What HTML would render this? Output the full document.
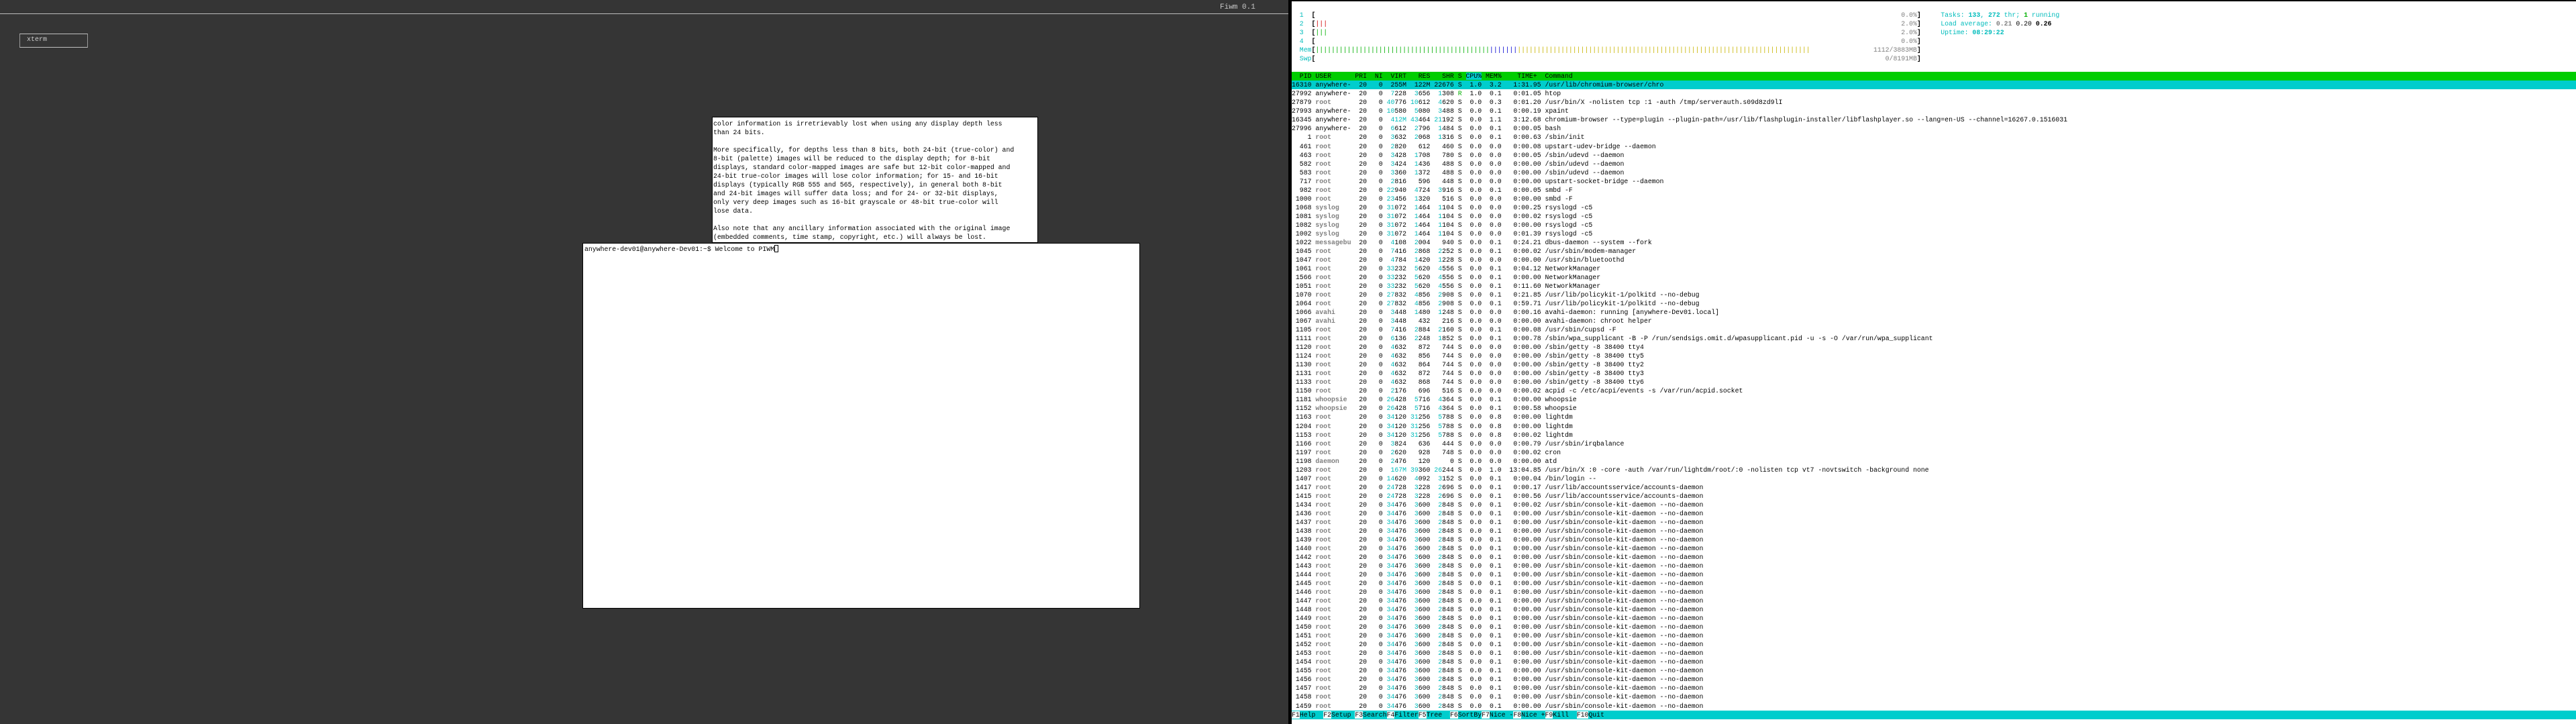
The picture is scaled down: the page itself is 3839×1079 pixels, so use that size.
<!DOCTYPE html>
<html><head><meta charset="utf-8">
<style>
*{margin:0;padding:0;box-sizing:border-box}
html,body{width:3839px;height:1079px;overflow:hidden;background:#353535}
body{position:relative;font-family:"Liberation Mono",monospace;font-size:9.83px;color:#000}
.ln{white-space:pre;height:13.04px;line-height:13.04px}
#topline{position:absolute;left:0;top:20px;width:1920px;height:1px;background:#bdbdbd}
#title{position:absolute;left:1818px;top:5px;color:#c8c8c8;font-size:11px;line-height:12px}
#btn{position:absolute;left:29px;top:50px;width:102px;height:21px;border:1px solid #9a9a9a;border-top-color:#c0c0c0;border-bottom-color:#c0c0c0;color:#cfcfcf;padding-left:10px;line-height:18px;font-size:10px}
#tw{position:absolute;left:1061px;top:174px;width:486px;height:188px;background:#fff;border:1px solid #000;overflow:hidden;padding:3px 0 0 1px}
#xt{position:absolute;left:868px;top:362px;width:831px;height:545px;background:#fff;border:1px solid #000;padding:2px 0 0 2px}
.cur{display:inline-block;width:6px;height:11px;border:1px solid #000;vertical-align:-2px}
#term{position:absolute;left:1920px;top:0;width:1919px;height:1079px;background:#fff;border-left:5px solid #000;border-top:2px solid #000}
#rows{position:absolute;left:0;top:1px;width:100%}
.c{color:#00bcbc}
.cb{color:#00bcbc;font-weight:bold}
.g{color:#7f7f7f;font-weight:bold}
.gr{color:#7f7f7f}
.G{color:#00b000}
.Gb{color:#00b000;font-weight:bold}
.R{color:#d00000}
.B{color:#0000d0}
.Y{color:#c8b400}
.b{font-weight:bold}
.hdr{background:#00cd00}
.sel{background:#00cdcd}
.hs{background:#00cdcd}
.m{position:relative}
.mv{position:absolute;left:0;top:0;width:159ch;text-align:right}
.rt{position:absolute;left:164ch;top:0}
.fk{background:#fff}
.fl{background:#00cdcd}
</style></head><body>
<div id="topline"></div>
<div id="title">Fiwm 0.1</div>
<div id="btn">xterm</div>

<div id="tw"><div class="ln">color information is irretrievably lost when using any display depth less</div><div class="ln">than 24 bits.</div><div class="ln"> </div><div class="ln">More specifically, for depths less than 8 bits, both 24-bit (true-color) and</div><div class="ln">8-bit (palette) images will be reduced to the display depth; for 8-bit</div><div class="ln">displays, standard color-mapped images are safe but 12-bit color-mapped and</div><div class="ln">24-bit true-color images will lose color information; for 15- and 16-bit</div><div class="ln">displays (typically RGB 555 and 565, respectively), in general both 8-bit</div><div class="ln">and 24-bit images will suffer data loss; and for 24- or 32-bit displays,</div><div class="ln">only very deep images such as 16-bit grayscale or 48-bit true-color will</div><div class="ln">lose data.</div><div class="ln"> </div><div class="ln">Also note that any ancillary information associated with the original image</div><div class="ln">(embedded comments, time stamp, copyright, etc.) will always be lost.</div></div>

<div id="xt"><div class="ln">anywhere-dev01@anywhere-Dev01:~$ Welcome to PIWM<span class="cur"></span></div></div>

<div id="term"><div id="rows">
<div class="ln"> </div>
<div class="ln m"><span class="c">  1  </span><span class="b">[</span><span class="mv"><span class="gr">0.0%</span><span class="b">]</span></span><span class="rt"><span class="c">Tasks: </span><span class="cb">133</span><span class="c">, </span><span class="cb">272</span><span class="c"> thr; </span><span class="Gb">1</span><span class="c"> running</span></span></div>
<div class="ln m"><span class="c">  2  </span><span class="b">[</span><span class="R">|||</span><span class="mv"><span class="gr">2.0%</span><span class="b">]</span></span><span class="rt"><span class="c">Load average: </span><span class="gr b">0.21 </span>0.20 <span class="b">0.26</span></span></div>
<div class="ln m"><span class="c">  3  </span><span class="b">[</span><span class="G">|||</span><span class="mv"><span class="gr">2.0%</span><span class="b">]</span></span><span class="rt"><span class="c">Uptime: </span><span class="cb">08:29:22</span></span></div>
<div class="ln m"><span class="c">  4  </span><span class="b">[</span><span class="mv"><span class="gr">0.0%</span><span class="b">]</span></span></div>
<div class="ln m"><span class="c">  Mem</span><span class="b">[</span><span class="G">||||||||||||||||||||||||||||||||||||||||||||</span><span class="B">|||||||</span><span class="Y">||||||||||||||||||||||||||||||||||||||||||||||||||||||||||||||||||||||||||</span><span class="mv"><span class="gr">1112/3883MB</span><span class="b">]</span></span></div>
<div class="ln m"><span class="c">  Swp</span><span class="b">[</span><span class="mv"><span class="gr">0/8191MB</span><span class="b">]</span></span></div>
<div class="ln"> </div>
<div class="ln hdr">  PID USER      PRI  NI  VIRT   RES   SHR S <span class="hs">CPU%</span> MEM%    TIME+  Command</div>
<div class="ln sel">16310 anywhere-  20   0  255M  122M 22676 S  1.0  3.2   1:31.95 /usr/lib/chromium-browser/chro</div>
<div class="ln">27992 anywhere-  20   0  <span class="c">7</span>228  <span class="c">3</span>656  <span class="c">1</span>308 <span class="G">R</span>  1.0  0.1   0:01.05 htop</div>
<div class="ln">27879 <span class="g">root</span>       20   0 <span class="c">40</span>776 <span class="c">10</span>612  <span class="c">4</span>620 S  0.0  0.3   0:01.20 /usr/bin/X -nolisten tcp :1 -auth /tmp/serverauth.s09d8zd9lI</div>
<div class="ln">27993 anywhere-  20   0 <span class="c">10</span>580  <span class="c">5</span>080  <span class="c">3</span>488 S  0.0  0.1   0:00.19 xpaint</div>
<div class="ln">16345 anywhere-  20   0  <span class="c">412M</span> <span class="c">43</span>464 <span class="c">21</span>192 S  0.0  1.1   3:12.68 chromium-browser --type=plugin --plugin-path=/usr/lib/flashplugin-installer/libflashplayer.so --lang=en-US --channel=16267.0.1516031</div>
<div class="ln">27996 anywhere-  20   0  <span class="c">6</span>612  <span class="c">2</span>796  <span class="c">1</span>484 S  0.0  0.1   0:00.05 bash</div>
<div class="ln">    1 <span class="g">root</span>       20   0  <span class="c">3</span>632  <span class="c">2</span>068  <span class="c">1</span>316 S  0.0  0.1   0:00.63 /sbin/init</div>
<div class="ln">  461 <span class="g">root</span>       20   0  <span class="c">2</span>820   612   460 S  0.0  0.0   0:00.08 upstart-udev-bridge --daemon</div>
<div class="ln">  463 <span class="g">root</span>       20   0  <span class="c">3</span>428  <span class="c">1</span>708   780 S  0.0  0.0   0:00.05 /sbin/udevd --daemon</div>
<div class="ln">  582 <span class="g">root</span>       20   0  <span class="c">3</span>424  <span class="c">1</span>436   488 S  0.0  0.0   0:00.00 /sbin/udevd --daemon</div>
<div class="ln">  583 <span class="g">root</span>       20   0  <span class="c">3</span>360  <span class="c">1</span>372   488 S  0.0  0.0   0:00.00 /sbin/udevd --daemon</div>
<div class="ln">  717 <span class="g">root</span>       20   0  <span class="c">2</span>816   596   448 S  0.0  0.0   0:00.00 upstart-socket-bridge --daemon</div>
<div class="ln">  982 <span class="g">root</span>       20   0 <span class="c">22</span>940  <span class="c">4</span>724  <span class="c">3</span>916 S  0.0  0.1   0:00.05 smbd -F</div>
<div class="ln"> 1000 <span class="g">root</span>       20   0 <span class="c">23</span>456  <span class="c">1</span>320   516 S  0.0  0.0   0:00.00 smbd -F</div>
<div class="ln"> 1068 <span class="g">syslog</span>     20   0 <span class="c">31</span>072  <span class="c">1</span>464  <span class="c">1</span>104 S  0.0  0.0   0:00.25 rsyslogd -c5</div>
<div class="ln"> 1081 <span class="g">syslog</span>     20   0 <span class="c">31</span>072  <span class="c">1</span>464  <span class="c">1</span>104 S  0.0  0.0   0:00.02 rsyslogd -c5</div>
<div class="ln"> 1082 <span class="g">syslog</span>     20   0 <span class="c">31</span>072  <span class="c">1</span>464  <span class="c">1</span>104 S  0.0  0.0   0:00.00 rsyslogd -c5</div>
<div class="ln"> 1002 <span class="g">syslog</span>     20   0 <span class="c">31</span>072  <span class="c">1</span>464  <span class="c">1</span>104 S  0.0  0.0   0:01.39 rsyslogd -c5</div>
<div class="ln"> 1022 <span class="g">messagebu</span>  20   0  <span class="c">4</span>108  <span class="c">2</span>004   940 S  0.0  0.1   0:24.21 dbus-daemon --system --fork</div>
<div class="ln"> 1045 <span class="g">root</span>       20   0  <span class="c">7</span>416  <span class="c">2</span>868  <span class="c">2</span>252 S  0.0  0.1   0:00.02 /usr/sbin/modem-manager</div>
<div class="ln"> 1047 <span class="g">root</span>       20   0  <span class="c">4</span>784  <span class="c">1</span>420  <span class="c">1</span>228 S  0.0  0.0   0:00.00 /usr/sbin/bluetoothd</div>
<div class="ln"> 1061 <span class="g">root</span>       20   0 <span class="c">33</span>232  <span class="c">5</span>620  <span class="c">4</span>556 S  0.0  0.1   0:04.12 NetworkManager</div>
<div class="ln"> 1566 <span class="g">root</span>       20   0 <span class="c">33</span>232  <span class="c">5</span>620  <span class="c">4</span>556 S  0.0  0.1   0:00.00 NetworkManager</div>
<div class="ln"> 1051 <span class="g">root</span>       20   0 <span class="c">33</span>232  <span class="c">5</span>620  <span class="c">4</span>556 S  0.0  0.1   0:11.60 NetworkManager</div>
<div class="ln"> 1070 <span class="g">root</span>       20   0 <span class="c">27</span>832  <span class="c">4</span>856  <span class="c">2</span>908 S  0.0  0.1   0:21.85 /usr/lib/policykit-1/polkitd --no-debug</div>
<div class="ln"> 1064 <span class="g">root</span>       20   0 <span class="c">27</span>832  <span class="c">4</span>856  <span class="c">2</span>908 S  0.0  0.1   0:59.71 /usr/lib/policykit-1/polkitd --no-debug</div>
<div class="ln"> 1066 <span class="g">avahi</span>      20   0  <span class="c">3</span>448  <span class="c">1</span>480  <span class="c">1</span>248 S  0.0  0.0   0:00.16 avahi-daemon: running [anywhere-Dev01.local]</div>
<div class="ln"> 1067 <span class="g">avahi</span>      20   0  <span class="c">3</span>448   432   216 S  0.0  0.0   0:00.00 avahi-daemon: chroot helper</div>
<div class="ln"> 1105 <span class="g">root</span>       20   0  <span class="c">7</span>416  <span class="c">2</span>884  <span class="c">2</span>160 S  0.0  0.1   0:00.08 /usr/sbin/cupsd -F</div>
<div class="ln"> 1111 <span class="g">root</span>       20   0  <span class="c">6</span>136  <span class="c">2</span>248  <span class="c">1</span>852 S  0.0  0.1   0:00.78 /sbin/wpa_supplicant -B -P /run/sendsigs.omit.d/wpasupplicant.pid -u -s -O /var/run/wpa_supplicant</div>
<div class="ln"> 1120 <span class="g">root</span>       20   0  <span class="c">4</span>632   872   744 S  0.0  0.0   0:00.00 /sbin/getty -8 38400 tty4</div>
<div class="ln"> 1124 <span class="g">root</span>       20   0  <span class="c">4</span>632   856   744 S  0.0  0.0   0:00.00 /sbin/getty -8 38400 tty5</div>
<div class="ln"> 1130 <span class="g">root</span>       20   0  <span class="c">4</span>632   864   744 S  0.0  0.0   0:00.00 /sbin/getty -8 38400 tty2</div>
<div class="ln"> 1131 <span class="g">root</span>       20   0  <span class="c">4</span>632   872   744 S  0.0  0.0   0:00.00 /sbin/getty -8 38400 tty3</div>
<div class="ln"> 1133 <span class="g">root</span>       20   0  <span class="c">4</span>632   868   744 S  0.0  0.0   0:00.00 /sbin/getty -8 38400 tty6</div>
<div class="ln"> 1150 <span class="g">root</span>       20   0  <span class="c">2</span>176   696   516 S  0.0  0.0   0:00.02 acpid -c /etc/acpi/events -s /var/run/acpid.socket</div>
<div class="ln"> 1181 <span class="g">whoopsie</span>   20   0 <span class="c">26</span>428  <span class="c">5</span>716  <span class="c">4</span>364 S  0.0  0.1   0:00.00 whoopsie</div>
<div class="ln"> 1152 <span class="g">whoopsie</span>   20   0 <span class="c">26</span>428  <span class="c">5</span>716  <span class="c">4</span>364 S  0.0  0.1   0:00.58 whoopsie</div>
<div class="ln"> 1163 <span class="g">root</span>       20   0 <span class="c">34</span>120 <span class="c">31</span>256  <span class="c">5</span>788 S  0.0  0.8   0:00.00 lightdm</div>
<div class="ln"> 1204 <span class="g">root</span>       20   0 <span class="c">34</span>120 <span class="c">31</span>256  <span class="c">5</span>788 S  0.0  0.8   0:00.00 lightdm</div>
<div class="ln"> 1153 <span class="g">root</span>       20   0 <span class="c">34</span>120 <span class="c">31</span>256  <span class="c">5</span>788 S  0.0  0.8   0:00.02 lightdm</div>
<div class="ln"> 1166 <span class="g">root</span>       20   0  <span class="c">3</span>824   636   444 S  0.0  0.0   0:00.79 /usr/sbin/irqbalance</div>
<div class="ln"> 1197 <span class="g">root</span>       20   0  <span class="c">2</span>620   928   748 S  0.0  0.0   0:00.02 cron</div>
<div class="ln"> 1198 <span class="g">daemon</span>     20   0  <span class="c">2</span>476   120     0 S  0.0  0.0   0:00.00 atd</div>
<div class="ln"> 1203 <span class="g">root</span>       20   0  <span class="c">167M</span> <span class="c">39</span>360 <span class="c">26</span>244 S  0.0  1.0  13:04.85 /usr/bin/X :0 -core -auth /var/run/lightdm/root/:0 -nolisten tcp vt7 -novtswitch -background none</div>
<div class="ln"> 1407 <span class="g">root</span>       20   0 <span class="c">14</span>620  <span class="c">4</span>092  <span class="c">3</span>152 S  0.0  0.1   0:00.04 /bin/login --</div>
<div class="ln"> 1417 <span class="g">root</span>       20   0 <span class="c">24</span>728  <span class="c">3</span>228  <span class="c">2</span>696 S  0.0  0.1   0:00.17 /usr/lib/accountsservice/accounts-daemon</div>
<div class="ln"> 1415 <span class="g">root</span>       20   0 <span class="c">24</span>728  <span class="c">3</span>228  <span class="c">2</span>696 S  0.0  0.1   0:00.56 /usr/lib/accountsservice/accounts-daemon</div>
<div class="ln"> 1434 <span class="g">root</span>       20   0 <span class="c">34</span>476  <span class="c">3</span>600  <span class="c">2</span>848 S  0.0  0.1   0:00.02 /usr/sbin/console-kit-daemon --no-daemon</div>
<div class="ln"> 1436 <span class="g">root</span>       20   0 <span class="c">34</span>476  <span class="c">3</span>600  <span class="c">2</span>848 S  0.0  0.1   0:00.00 /usr/sbin/console-kit-daemon --no-daemon</div>
<div class="ln"> 1437 <span class="g">root</span>       20   0 <span class="c">34</span>476  <span class="c">3</span>600  <span class="c">2</span>848 S  0.0  0.1   0:00.00 /usr/sbin/console-kit-daemon --no-daemon</div>
<div class="ln"> 1438 <span class="g">root</span>       20   0 <span class="c">34</span>476  <span class="c">3</span>600  <span class="c">2</span>848 S  0.0  0.1   0:00.00 /usr/sbin/console-kit-daemon --no-daemon</div>
<div class="ln"> 1439 <span class="g">root</span>       20   0 <span class="c">34</span>476  <span class="c">3</span>600  <span class="c">2</span>848 S  0.0  0.1   0:00.00 /usr/sbin/console-kit-daemon --no-daemon</div>
<div class="ln"> 1440 <span class="g">root</span>       20   0 <span class="c">34</span>476  <span class="c">3</span>600  <span class="c">2</span>848 S  0.0  0.1   0:00.00 /usr/sbin/console-kit-daemon --no-daemon</div>
<div class="ln"> 1442 <span class="g">root</span>       20   0 <span class="c">34</span>476  <span class="c">3</span>600  <span class="c">2</span>848 S  0.0  0.1   0:00.00 /usr/sbin/console-kit-daemon --no-daemon</div>
<div class="ln"> 1443 <span class="g">root</span>       20   0 <span class="c">34</span>476  <span class="c">3</span>600  <span class="c">2</span>848 S  0.0  0.1   0:00.00 /usr/sbin/console-kit-daemon --no-daemon</div>
<div class="ln"> 1444 <span class="g">root</span>       20   0 <span class="c">34</span>476  <span class="c">3</span>600  <span class="c">2</span>848 S  0.0  0.1   0:00.00 /usr/sbin/console-kit-daemon --no-daemon</div>
<div class="ln"> 1445 <span class="g">root</span>       20   0 <span class="c">34</span>476  <span class="c">3</span>600  <span class="c">2</span>848 S  0.0  0.1   0:00.00 /usr/sbin/console-kit-daemon --no-daemon</div>
<div class="ln"> 1446 <span class="g">root</span>       20   0 <span class="c">34</span>476  <span class="c">3</span>600  <span class="c">2</span>848 S  0.0  0.1   0:00.00 /usr/sbin/console-kit-daemon --no-daemon</div>
<div class="ln"> 1447 <span class="g">root</span>       20   0 <span class="c">34</span>476  <span class="c">3</span>600  <span class="c">2</span>848 S  0.0  0.1   0:00.00 /usr/sbin/console-kit-daemon --no-daemon</div>
<div class="ln"> 1448 <span class="g">root</span>       20   0 <span class="c">34</span>476  <span class="c">3</span>600  <span class="c">2</span>848 S  0.0  0.1   0:00.00 /usr/sbin/console-kit-daemon --no-daemon</div>
<div class="ln"> 1449 <span class="g">root</span>       20   0 <span class="c">34</span>476  <span class="c">3</span>600  <span class="c">2</span>848 S  0.0  0.1   0:00.00 /usr/sbin/console-kit-daemon --no-daemon</div>
<div class="ln"> 1450 <span class="g">root</span>       20   0 <span class="c">34</span>476  <span class="c">3</span>600  <span class="c">2</span>848 S  0.0  0.1   0:00.00 /usr/sbin/console-kit-daemon --no-daemon</div>
<div class="ln"> 1451 <span class="g">root</span>       20   0 <span class="c">34</span>476  <span class="c">3</span>600  <span class="c">2</span>848 S  0.0  0.1   0:00.00 /usr/sbin/console-kit-daemon --no-daemon</div>
<div class="ln"> 1452 <span class="g">root</span>       20   0 <span class="c">34</span>476  <span class="c">3</span>600  <span class="c">2</span>848 S  0.0  0.1   0:00.00 /usr/sbin/console-kit-daemon --no-daemon</div>
<div class="ln"> 1453 <span class="g">root</span>       20   0 <span class="c">34</span>476  <span class="c">3</span>600  <span class="c">2</span>848 S  0.0  0.1   0:00.00 /usr/sbin/console-kit-daemon --no-daemon</div>
<div class="ln"> 1454 <span class="g">root</span>       20   0 <span class="c">34</span>476  <span class="c">3</span>600  <span class="c">2</span>848 S  0.0  0.1   0:00.00 /usr/sbin/console-kit-daemon --no-daemon</div>
<div class="ln"> 1455 <span class="g">root</span>       20   0 <span class="c">34</span>476  <span class="c">3</span>600  <span class="c">2</span>848 S  0.0  0.1   0:00.00 /usr/sbin/console-kit-daemon --no-daemon</div>
<div class="ln"> 1456 <span class="g">root</span>       20   0 <span class="c">34</span>476  <span class="c">3</span>600  <span class="c">2</span>848 S  0.0  0.1   0:00.00 /usr/sbin/console-kit-daemon --no-daemon</div>
<div class="ln"> 1457 <span class="g">root</span>       20   0 <span class="c">34</span>476  <span class="c">3</span>600  <span class="c">2</span>848 S  0.0  0.1   0:00.00 /usr/sbin/console-kit-daemon --no-daemon</div>
<div class="ln"> 1458 <span class="g">root</span>       20   0 <span class="c">34</span>476  <span class="c">3</span>600  <span class="c">2</span>848 S  0.0  0.1   0:00.00 /usr/sbin/console-kit-daemon --no-daemon</div>
<div class="ln"> 1459 <span class="g">root</span>       20   0 <span class="c">34</span>476  <span class="c">3</span>600  <span class="c">2</span>848 S  0.0  0.1   0:00.00 /usr/sbin/console-kit-daemon --no-daemon</div>
<div class="ln fl"><span class="fk">F1</span>Help  <span class="fk">F2</span>Setup <span class="fk">F3</span>Search<span class="fk">F4</span>Filter<span class="fk">F5</span>Tree  <span class="fk">F6</span>SortBy<span class="fk">F7</span>Nice -<span class="fk">F8</span>Nice +<span class="fk">F9</span>Kill  <span class="fk">F10</span>Quit</div>
</div></div>
</body></html>
